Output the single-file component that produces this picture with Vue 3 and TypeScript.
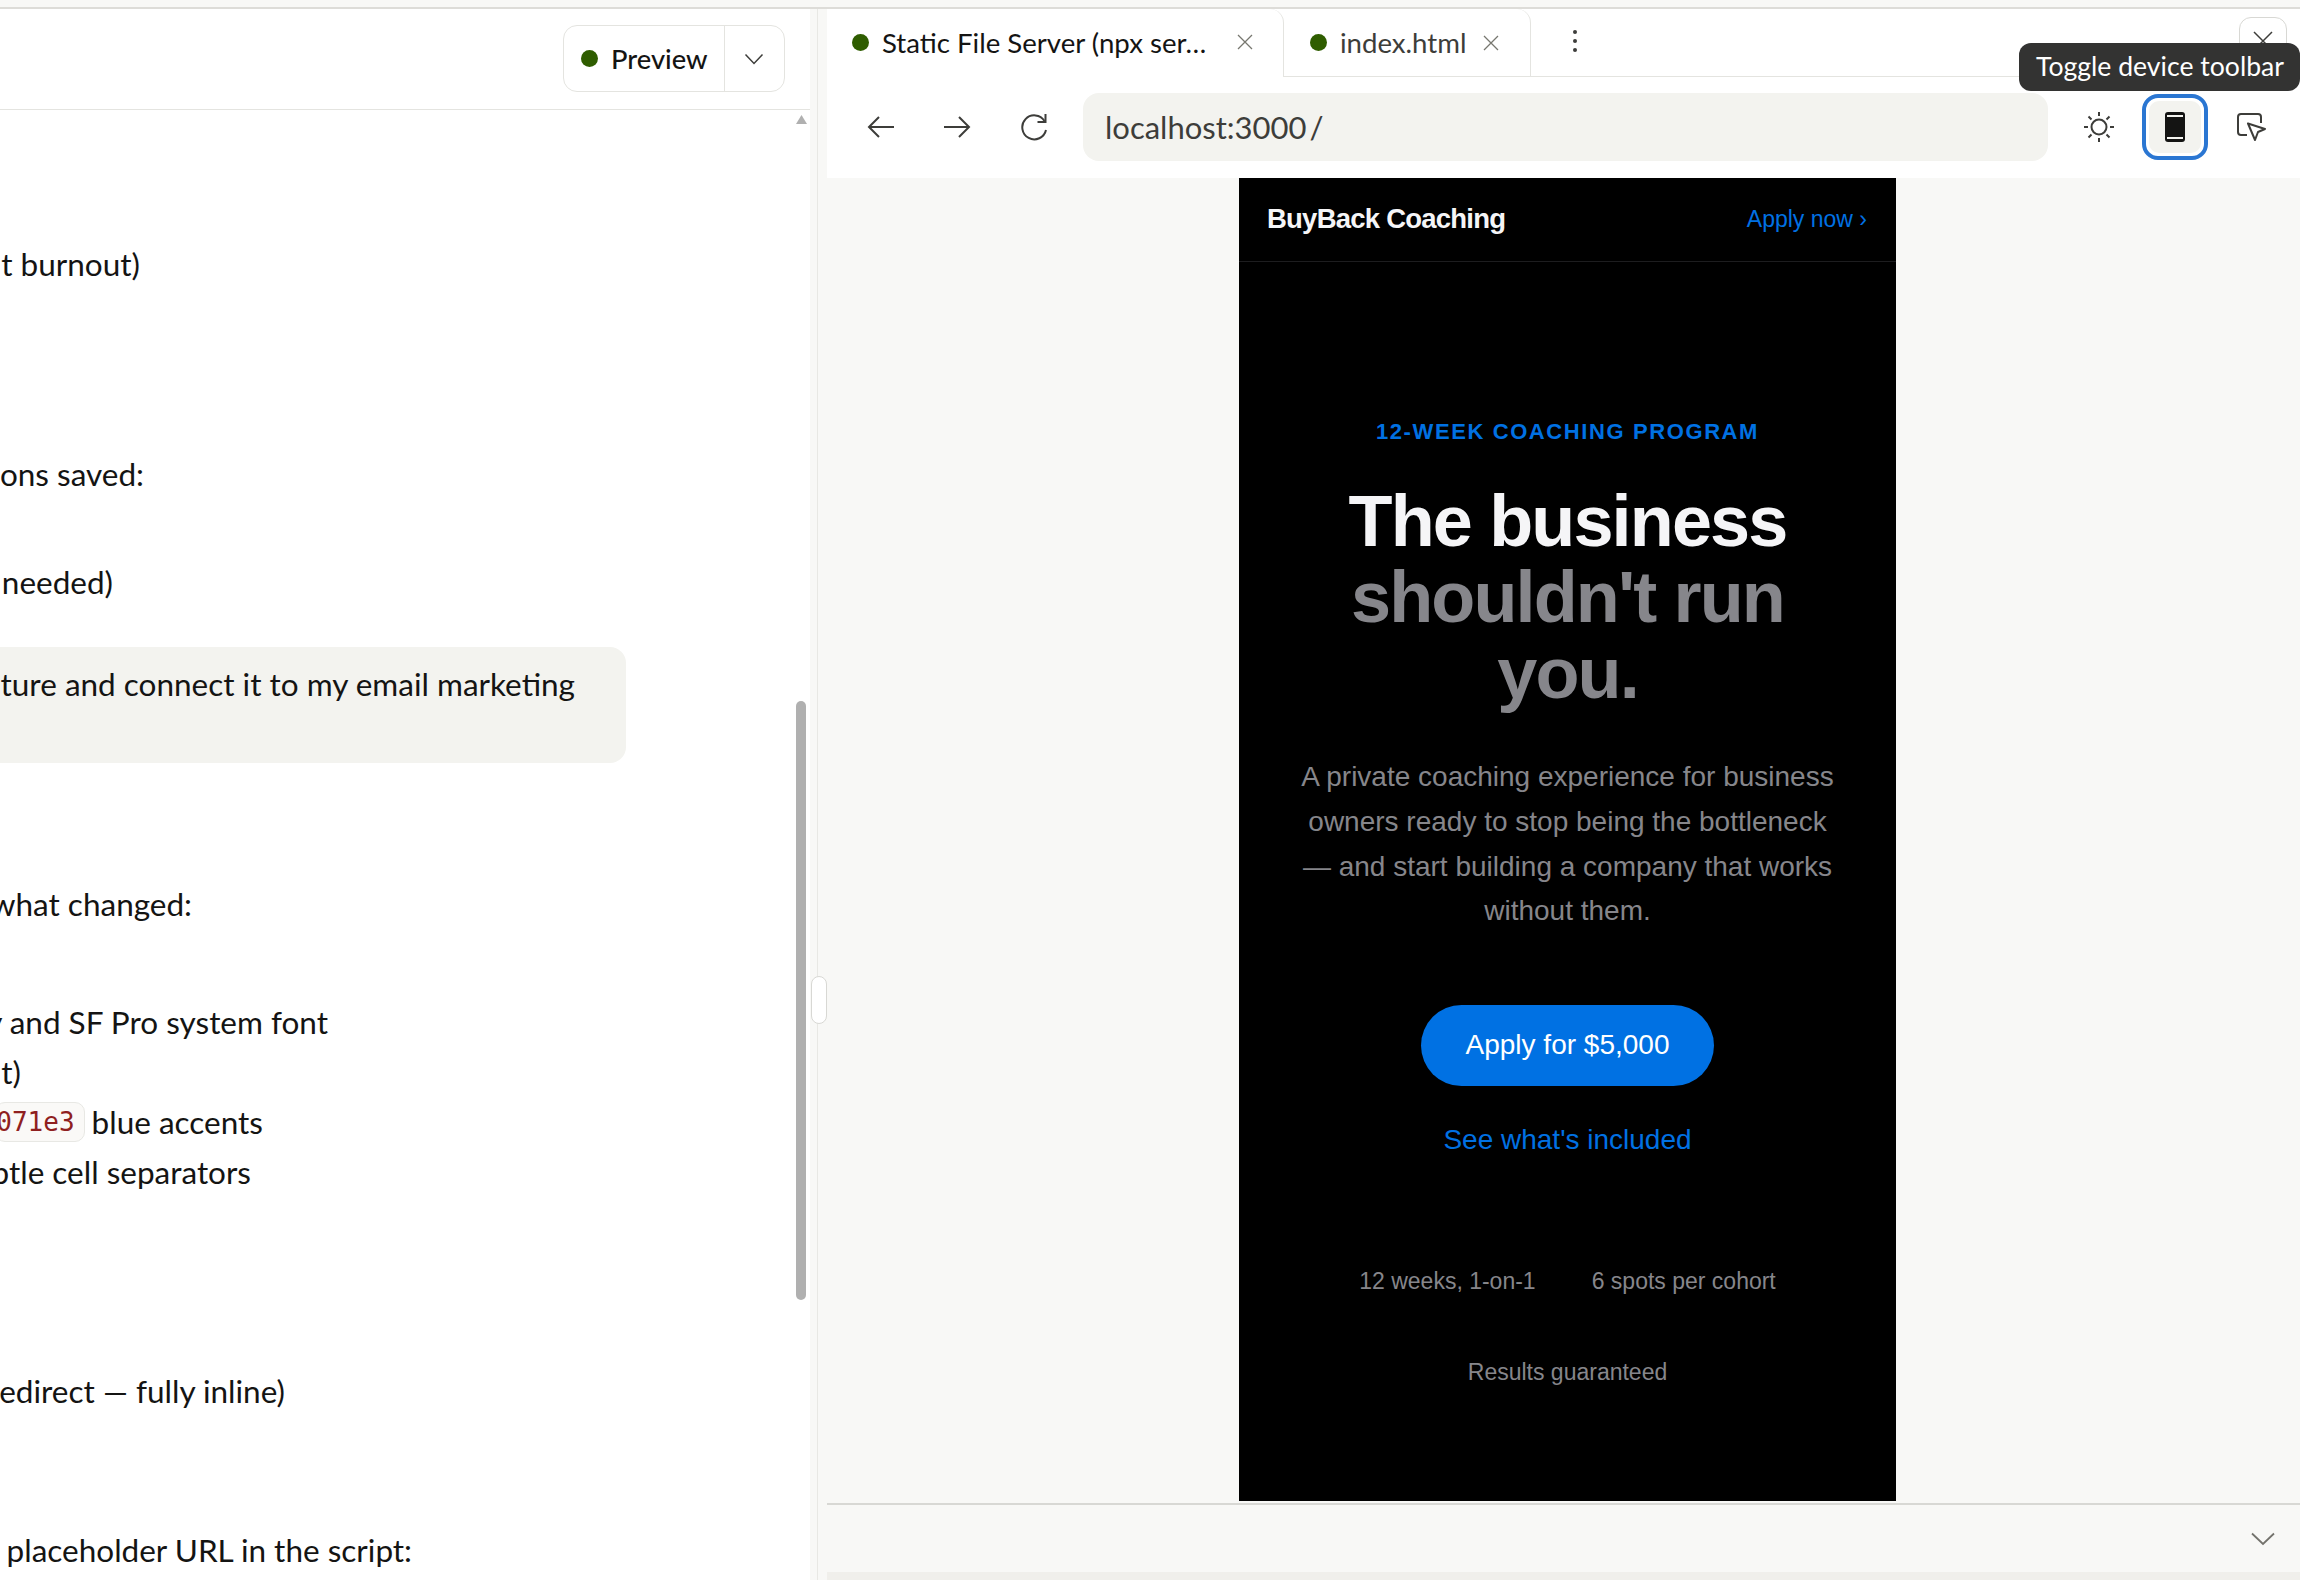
<script setup lang="ts">
interface Line { text: string; end: number; top: number }
const firstLines: Line[] = [
  { text: 't burnout)', end: 140, top: 129 },
  { text: 'ons saved:', end: 144, top: 160 },
  { text: 'needed)', end: 113, top: 58 },
]
const listLines: Line[] = [
  { text: 'y and SF Pro system font', end: 328, top: 68 },
  { text: 't)', end: 21, top: 0 },
]
const lastLines: Line[] = [
  { text: 'edirect — fully inline)', end: 285, top: 169 },
  { text: ' placeholder URL in the script:', end: 412, top: 109 },
]
</script>

<template>
  <div class="app">
    <div class="topstrip"></div>
    <div class="main">
      <section class="left">
        <header class="left-head">
          <div class="preview-btn">
            <div class="preview-main">
              <span class="dot"></span>
              <span class="preview-label">Preview</span>
            </div>
            <div class="preview-chev">
              <svg width="20" height="12" viewBox="0 0 20 12"><path d="M1.5 1.5 10 10.5l8.500-9" fill="none" stroke="#3d3d3a" stroke-width="1.500"/></svg>
            </div>
          </div>
        </header>
        <div class="chat">
          <div v-for="l in firstLines" :key="l.text" class="line" :style="{ width: l.end + 'px', marginTop: l.top + 'px' }"><span>{{ l.text }}</span></div>
          <div class="bubble">
            <div class="line bubble-line"><span>pture and connect it to my email marketing</span></div>
          </div>
          <div class="line changed"><span>what changed:</span></div>
          <div v-for="l in listLines" :key="l.text" class="line" :style="{ width: l.end + 'px', marginTop: l.top + 'px' }"><span>{{ l.text }}</span></div>
          <div class="line accents"><code class="code">071e3</code><span>blue accents</span></div>
          <div class="line subtle"><span>btle cell separators</span></div>
          <div v-for="l in lastLines" :key="l.text" class="line" :style="{ width: l.end + 'px', marginTop: l.top + 'px' }"><span>{{ l.text }}</span></div>
        </div>
        <div class="scroll-up"></div>
        <div class="scroll-thumb"></div>
      </section>
      <div class="gutter"><div class="handle"></div></div>
      <section class="right">
        <div class="tabs">
          <div class="tab active">
            <span class="dot"></span>
            <span class="tab-label">Static File Server (npx ser…</span>
            <svg class="tab-x" width="16" height="16" viewBox="0 0 16 16"><path d="M1 1l14 14M15 1 1 15" stroke="#77776f" stroke-width="1.300"/></svg>
          </div>
          <div class="tab second">
            <span class="dot"></span>
            <span class="tab-label muted">index.html</span>
            <svg class="tab-x" width="16" height="16" viewBox="0 0 16 16"><path d="M1 1l14 14M15 1 1 15" stroke="#77776f" stroke-width="1.300"/></svg>
          </div>
          <div class="kebab"><i></i><i></i><i></i></div>
          <div class="close-box">
            <svg width="22" height="22" viewBox="0 0 22 22"><path d="M2 2l18 18M20 2 2 20" stroke="#3d3d3a" stroke-width="1.500"/></svg>
          </div>
        </div>
        <div class="toolbar">
          <svg class="nav-ico" width="28" height="24" viewBox="0 0 28 24"><path d="M27 12H2M12 2 2 12l10 10" fill="none" stroke="#3d3d3a" stroke-width="2"/></svg>
          <svg class="nav-ico fwd" width="28" height="24" viewBox="0 0 28 24"><path d="M1 12h25M16 2l10 10-10 10" fill="none" stroke="#3d3d3a" stroke-width="2"/></svg>
          <svg class="nav-ico rel" width="30" height="28" viewBox="0 0 30 28"><path d="M24.500 8A12 12 0 1 0 26 17" fill="none" stroke="#3d3d3a" stroke-width="2"/><path d="M25.500 1v8h-8" fill="none" stroke="#3d3d3a" stroke-width="2"/></svg>
          <div class="url"><span>localhost:3000</span><span class="slash">/</span></div>
          <svg class="sun" width="32" height="32" viewBox="0 0 32 32">
            <circle cx="16" cy="16" r="7.500" fill="none" stroke="#3d3d3a" stroke-width="2"/>
            <path d="M16 1v4M16 27v4M1 16h4M27 16h4M5.500 5.500l3 3M23.500 23.500l3 3M26.500 5.500l-3 3M8.500 23.500l-3 3" stroke="#3d3d3a" stroke-width="2"/>
          </svg>
          <div class="device-btn">
            <div class="device-inner">
              <svg width="20" height="30" viewBox="0 0 20 30"><rect width="20" height="30" rx="3" fill="#141413"/><path d="M2 4h16M2 26h16" stroke="#f3f3ef" stroke-width="2"/></svg>
            </div>
          </div>
          <svg class="pick" width="30" height="28" viewBox="0 0 30 28">
            <path d="M10 22H4a3 3 0 0 1-3-3V4a3 3 0 0 1 3-3h17a3 3 0 0 1 3 3v6" fill="none" stroke="#3d3d3a" stroke-width="2"/>
            <path d="M11 10.500 28 16l-7 3-3 8z" fill="#fff" stroke="#3d3d3a" stroke-width="2" stroke-linejoin="round"/>
          </svg>
        </div>
        <div class="stage">
          <article class="phone">
            <nav class="phone-nav">
              <span class="brand">BuyBack Coaching</span>
              <a class="apply">Apply now ›</a>
            </nav>
            <div class="hero">
              <p class="eyebrow">12-WEEK COACHING PROGRAM</p>
              <h1 class="headline">The business<br><span>shouldn't run you.</span></h1>
              <p class="sub">A private coaching experience for business owners ready to stop being the bottleneck — and start building a company that works without them.</p>
              <a class="cta">Apply for $5,000</a>
              <a class="more">See what's included</a>
              <div class="stats">
                <span>12 weeks, 1-on-1</span>
                <span>6 spots per cohort</span>
                <span>Results guaranteed</span>
              </div>
            </div>
          </article>
        </div>
        <div class="bottom">
          <svg width="24" height="14" viewBox="0 0 24 14"><path d="M1 1.500 12 12 23 1.500" fill="none" stroke="#73726c" stroke-width="1.800"/></svg>
        </div>
        <div class="bottom-band"></div>
      </section>
    </div>
    <div class="tooltip">Toggle device toolbar</div>
  </div>
</template>

<style scoped>
.app {
  position: relative;
  width: 2300px;
  height: 1580px;
  overflow: hidden;
  background: #f8f8f6;
  font-family: "Lato", "Noto Sans", sans-serif;
  color: #141413;
}
.topstrip {
  height: 7px;
  background: #f8f8f6;
  border-bottom: 2px solid #dddcd8;
}
.main {
  display: flex;
  height: 1571px;
}
.left {
  position: relative;
  width: 810px;
  flex: none;
  background: #fff;
}
.left-head {
  height: 101px;
  box-sizing: border-box;
  border-bottom: 1px solid #e4e4e0;
  display: flex;
  justify-content: flex-end;
  align-items: flex-start;
  padding: 16px 25px 0 0;
}
.preview-btn {
  display: flex;
  height: 67px;
  width: 222px;
  box-sizing: border-box;
  border: 1px solid #e4e4e0;
  border-radius: 14px;
  background: #fff;
}
.preview-main {
  width: 161px;
  display: flex;
  align-items: center;
  padding-left: 17px;
  gap: 13px;
  border-right: 1px solid #e4e4e0;
  box-sizing: border-box;
}
.preview-chev {
  flex: 1;
  display: flex;
  align-items: center;
  justify-content: center;
  padding-right: 2px;
}
.preview-label {
  font-size: 27.300px;
  font-weight: 500;
}
.dot {
  display: block;
  width: 17px;
  height: 17px;
  border-radius: 50%;
  background: #2f5d00;
  flex: none;
}
.chat {
  font-size: 31.500px;
}
.line {
  height: 50px;
  line-height: 50px;
  white-space: nowrap;
  display: flex;
  justify-content: flex-end;
  color: #141413;
}
.line span {
  white-space: pre;
}
.bubble {
  width: 626px;
  height: 116px;
  margin-top: 40px;
  border-radius: 0 16px 16px 0;
  background: #f3f3ef;
  padding-top: 12px;
  box-sizing: border-box;
}
.bubble-line {
  width: 575px;
}
.changed {
  width: 192px;
  margin-top: 116px;
}
.accents {
  width: 263px;
  align-items: center;
  gap: 7px;
}
.code {
  font-family: "DejaVu Sans Mono", monospace;
  font-size: 26px;
  line-height: 38px;
  height: 38px;
  color: #8f2020;
  background: #faf9f7;
  border: 1px solid #e8e8e4;
  border-radius: 10px;
  padding: 0 9px 0 0;
}
.subtle {
  width: 251px;
}
.scroll-up {
  position: absolute;
  left: 796px;
  top: 106px;
  width: 11px;
  height: 9px;
  background: #b0b0b0;
  clip-path: polygon(50% 0, 100% 100%, 0 100%);
}
.scroll-thumb {
  position: absolute;
  left: 796px;
  top: 692px;
  width: 10px;
  height: 599px;
  border-radius: 5px;
  background: #b0b0b0;
}
.gutter {
  position: relative;
  width: 17px;
  flex: none;
  background: #f8f8f6;
}
.gutter::before {
  content: "";
  position: absolute;
  left: 7px;
  top: 0;
  bottom: 0;
  width: 1px;
  background: #e8e8e4;
}
.handle {
  position: absolute;
  left: 1px;
  top: 967px;
  width: 16px;
  height: 48px;
  box-sizing: border-box;
  background: #fff;
  border: 1px solid #d8d8d4;
  border-radius: 8px;
}
.right {
  flex: 1;
  min-width: 0;
  display: flex;
  flex-direction: column;
}
.tabs {
  position: relative;
  height: 68px;
  box-sizing: border-box;
  flex: none;
  display: flex;
  background: #fff;
  border-bottom: 1px solid #e4e4e0;
}
.tab {
  display: flex;
  align-items: center;
  height: 68px;
  box-sizing: border-box;
  flex: none;
}
.tab.active {
  width: 457px;
  padding-left: 25px;
  background: #fff;
  border-right: 1px solid #e4e4e0;
  border-radius: 14px 14px 0 0;
  position: relative;
  padding-bottom: 2px;
}
.tab.second {
  width: 247px;
  padding-left: 26px;
  border-right: 1px solid #e4e4e0;
  border-radius: 0 14px 0 0;
  height: 67px;
}
.tab-label {
  font-size: 27.600px;
  margin-left: 13px;
  white-space: nowrap;
}
.tab-label.muted {
  color: #3d3d3a;
}
.tab-x {
  margin-left: auto;
  margin-right: 30px;
}
.second .tab-x {
  margin-right: 31px;
}
.kebab {
  margin-left: 42px;
  display: flex;
  flex-direction: column;
  gap: 5px;
  padding-top: 21px;
}
.kebab i {
  display: block;
  width: 4px;
  height: 4px;
  border-radius: 50%;
  background: #3d3d3a;
}
.close-box {
  position: absolute;
  right: 13px;
  top: 8px;
  width: 48px;
  height: 48px;
  box-sizing: border-box;
  border: 1px solid #d8d8d4;
  border-radius: 12px;
  display: flex;
  align-items: center;
  justify-content: center;
  background: #fff;
}
.toolbar {
  height: 101px;
  flex: none;
  background: #fff;
  display: flex;
  align-items: center;
  padding: 0 0 2px 40px;
  box-sizing: border-box;
}
.nav-ico { flex: none; }
.fwd { margin-left: 48px; }
.rel { margin-left: 49px; }
.url {
  width: 965px;
  height: 68px;
  margin-left: 33px;
  flex: none;
  background: #f3f3ef;
  border-radius: 16px;
  display: flex;
  align-items: center;
  padding-left: 22px;
  box-sizing: border-box;
  font-size: 31px;
  color: #3d3d3a;
}
.slash { margin-left: 3px; }
.sun { margin-left: 35px; flex: none; }
.device-btn {
  margin-left: 27px;
  width: 66px;
  height: 66px;
  box-sizing: border-box;
  border: 4px solid #2a76d2;
  border-radius: 16px;
  padding: 3px;
  flex: none;
}
.device-inner {
  width: 100%;
  height: 100%;
  background: #f3f3ef;
  border-radius: 10px;
  display: flex;
  align-items: center;
  justify-content: center;
}
.pick { margin-left: 29px; flex: none; }
.stage {
  flex: 1;
  display: flex;
  justify-content: center;
  min-height: 0;
  background: #f8f8f6;
  padding-left: 8px;
}
.phone {
  width: 657px;
  height: 1323px;
  flex: none;
  background: #000;
  color: #f5f5f7;
  font-family: "Liberation Sans", Arial, sans-serif;
  overflow: hidden;
}
.phone-nav {
  height: 84px;
  box-sizing: border-box;
  border-bottom: 1px solid #1d1d1f;
  display: flex;
  justify-content: space-between;
  align-items: center;
  padding: 0 29px 0 28px;
}
.brand {
  font-size: 27.500px;
  line-height: 30px;
  font-weight: 700;
  letter-spacing: -0.77px;
  margin-bottom: 2px;
}
.apply {
  font-size: 23px;
  color: #0071e3;
}
.hero {
  display: flex;
  flex-direction: column;
  align-items: center;
  text-align: center;
  padding: 0 52px;
}
.eyebrow {
  margin: 157px 0 0;
  font-size: 22px;
  line-height: 26px;
  font-weight: 700;
  letter-spacing: 1.600px;
  color: #0071e3;
}
.headline {
  margin: 38px 0 0;
  font-size: 72px;
  line-height: 76px;
  font-weight: 700;
  letter-spacing: -1.850px;
  color: #f5f5f7;
}
.headline span {
  color: #86868b;
}
.sub {
  margin: 44px 0 0;
  font-size: 28px;
  line-height: 44.800px;
  color: #86868b;
}
.cta {
  margin-top: 71px;
  width: 293px;
  height: 81px;
  border-radius: 41px;
  background: #0071e3;
  color: #fff;
  font-size: 28px;
  line-height: 80px;
  flex: none;
}
.more {
  margin-top: 37px;
  font-size: 28px;
  line-height: 34px;
  color: #0071e3;
}
.stats {
  margin-top: 110px;
  display: flex;
  flex-wrap: wrap;
  justify-content: center;
  gap: 63px 56px;
  font-size: 23px;
  line-height: 28px;
  color: #86868b;
}
.bottom {
  flex: none;
  height: 69px;
  box-sizing: border-box;
  border-top: 2px solid #d8d8d4;
  display: flex;
  justify-content: flex-end;
  align-items: flex-start;
  padding: 27px 25px 0 0;
  background: #f8f8f6;
}
.bottom-band {
  flex: none;
  height: 8px;
  background: #f0efeb;
}
.tooltip {
  position: absolute;
  left: 2019px;
  top: 43px;
  width: 281px;
  height: 48px;
  box-sizing: border-box;
  border-radius: 12px;
  background: #333332;
  color: #fff;
  font-size: 26.600px;
  line-height: 47px;
  padding-left: 17px;
  white-space: nowrap;
}
</style>
